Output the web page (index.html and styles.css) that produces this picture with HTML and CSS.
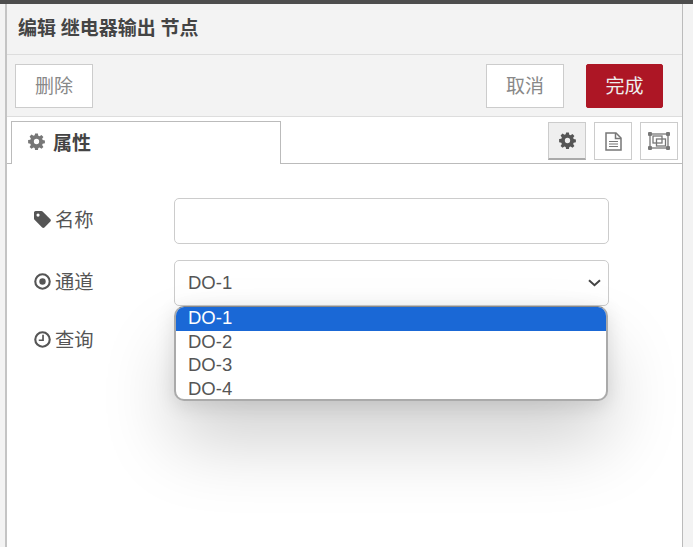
FILE: index.html
```html
<!DOCTYPE html>
<html lang="zh-CN">
<head>
    <meta charset="UTF-8">
    <title>编辑 继电器输出 节点</title>
    <link rel="stylesheet" href="styles.css">
</head>
<body>
    <div class="topbar"></div>
    <div class="tray">
        <div class="tray-title">编辑 继电器输出 节点</div>
        <div class="toolbar">
            <button class="btn">删除</button>
            <div class="toolbar-right">
                <button class="btn">取消</button>
                <button class="btn btn-primary">完成</button>
            </div>
        </div>
        <div class="tabs">
            <div class="tab">
                <svg class="icon gear-grey" viewBox="0 0 16 16"><use href="#gear"></use></svg>
                <span>属性</span>
            </div>
            <div class="tab-links">
                <a class="tab-link active">
                    <svg class="icon gear-dark" viewBox="0 0 16 16"><use href="#gear"></use></svg>
                </a>
                <a class="tab-link">
                    <svg class="doc-icon" viewBox="0 0 17 19" fill="none" stroke="#777" stroke-width="1.5">
                        <path d="M1 1h10l5 5v12H1z"/>
                        <path d="M10.500 1v5.500H16"/>
                        <path d="M4 9.500h9M4 12h9M4 14.500h9" stroke-width="1.200"/>
                    </svg>
                </a>
                <a class="tab-link">
                    <svg class="frame-icon" viewBox="0 0 22 18" fill="none" stroke="#777" stroke-width="1.300">
                        <rect x="2" y="2" width="18" height="14"/>
                        <rect x="5" y="4" width="9" height="7"/>
                        <rect x="8.500" y="7" width="9" height="7"/>
                        <g fill="#777" stroke="none">
                            <rect x="0" y="0" width="4" height="4" rx="1"/>
                            <rect x="18" y="0" width="4" height="4" rx="1"/>
                            <rect x="0" y="14" width="4" height="4" rx="1"/>
                            <rect x="18" y="14" width="4" height="4" rx="1"/>
                        </g>
                    </svg>
                </a>
            </div>
        </div>
        <div class="form">
            <div class="form-row">
                <label class="form-label">
                    <svg class="icon" viewBox="0 0 16 16"><path d="M0 1.500C0 .7.700 0 1.500 0h5.400c.5 0 .9.2 1.200.5l7.300 7.300c.6.6.6 1.500 0 2.100l-5.600 5.600c-.6.6-1.500.6-2.100 0L.5 8.200C.2 7.900 0 7.500 0 7z M3.800 2.300a1.500 1.500 0 1 0 0 3 1.500 1.500 0 0 0 0-3z" fill-rule="evenodd"/></svg>
                    <span>名称</span>
                </label>
                <input class="form-input" type="text">
            </div>
            <div class="form-row form-row-select">
                <label class="form-label">
                    <svg class="icon" viewBox="0 0 16 16"><circle class="icon-ring" cx="8" cy="8" r="6.800"/><circle cx="8" cy="8" r="3"/></svg>
                    <span>通道</span>
                </label>
                <div class="select-wrap">
                    <div class="select-box">
                        <span>DO-1</span>
                        <svg class="chevron" viewBox="0 0 13 8" fill="none" stroke="#444" stroke-width="2"><path d="M1 1.200l5.500 5 5.500-5"/></svg>
                    </div>
                    <ul class="select-menu">
                        <li class="selected">DO-1</li>
                        <li>DO-2</li>
                        <li>DO-3</li>
                        <li>DO-4</li>
                    </ul>
                </div>
            </div>
            <div class="form-row">
                <label class="form-label">
                    <svg class="icon" viewBox="0 0 16 16"><circle class="icon-ring" cx="8" cy="8" r="6.800"/><path class="icon-hand" d="M8.500 3.500v5.200H4.500"/></svg>
                    <span>查询</span>
                </label>
            </div>
        </div>
    </div>

    <svg class="defs" width="0" height="0">
        <symbol id="gear" viewBox="0 0 16 16">
            <path fill-rule="evenodd" d="M6.700 0.500h2.600l.4 2.100 1.200.5 1.800-1.200 1.800 1.800-1.200 1.800.5 1.200 2.100.4v2.600l-2.100.4-.5 1.200 1.200 1.800-1.800 1.800-1.800-1.200-1.200.5-.4 2.100H6.700l-.4-2.100-1.200-.5-1.800 1.200-1.800-1.800 1.200-1.800-.5-1.200-2.100-.4V6.700l2.100-.4.5-1.200-1.200-1.800 1.800-1.800 1.800 1.200 1.200-.5z M8 5.500a2.500 2.500 0 1 0 0 5 2.500 2.500 0 0 0 0-5z"/>
        </symbol>
    </svg>
</body>
</html>
```

FILE: styles.css
```css
* {
    box-sizing: border-box;
}

html, body {
    height: 100%;
}

body {
    margin: 0;
    background-color: #f3f3f3;
    color: #555;
    font-family: "Liberation Sans", "Noto Sans CJK SC", Arial, sans-serif;
    font-size: 18.500px;
    overflow: hidden;
}

.defs {
    display: block;
}

.topbar {
    height: 4px;
    background-color: #4d4d4d;
}

.tray {
    height: 543px;
    margin-left: 5px;
    margin-right: 10px;
    background-color: #fff;
    border-left: 2px solid #c4c4c4;
    border-right: 1px solid #bbb;
    display: flex;
    flex-direction: column;
}

.tray-title {
    height: 51px;
    padding: 0 11px;
    background-color: #f3f3f3;
    border-bottom: 1px solid #ddd;
    color: #444;
    font-size: 19px;
    font-weight: bold;
    line-height: 49px;
    word-spacing: -0.5px;
}

.toolbar {
    height: 62px;
    padding: 9px 19px 8px 8px;
    background-color: #f3f3f3;
    border-bottom: 1px solid #ddd;
    display: flex;
    justify-content: space-between;
}

.toolbar-right {
    display: flex;
    gap: 22px;
}

.btn {
    width: 78px;
    height: 44px;
    padding: 0 0 4px;
    background-color: #fff;
    border: 1px solid #ccc;
    color: #888;
    font-family: inherit;
    font-size: 19px;
}

.btn-primary {
    width: 77px;
    background-color: #ad1625;
    border-color: #ad1625;
    border-radius: 2px;
    color: #eee;
}

.tabs {
    height: 47px;
    padding: 4px 4px 0;
    border-bottom: 1px solid #bbb;
    display: flex;
    justify-content: space-between;
}

.tab {
    width: 270px;
    height: 43px;
    padding: 0 0 3px 16px;
    background-color: #fff;
    border: 1px solid #bbb;
    border-bottom: none;
    color: #444;
    font-size: 19px;
    font-weight: bold;
    display: flex;
    align-items: center;
    gap: 8px;
}

.tab-links {
    display: flex;
    gap: 8px;
    height: 38px;
    margin-top: 1px;
}

.tab-link {
    width: 38px;
    height: 38px;
    background-color: #fff;
    border: 1px solid #ccc;
    display: flex;
    align-items: center;
    justify-content: center;
}

.tab-link.active {
    background-color: #efefef;
    border-bottom: 2px solid #aaa;
}

.icon {
    width: 17px;
    height: 17px;
    fill: #555;
    flex-shrink: 0;
}

.icon-ring {
    fill: none;
    stroke: #555;
    stroke-width: 2;
}

.icon-hand {
    fill: none;
    stroke: #555;
    stroke-width: 1.600;
}

.gear-grey {
    fill: #777;
}

.gear-dark {
    fill: #555;
}

.doc-icon {
    width: 17px;
    height: 19px;
}

.frame-icon {
    width: 22px;
    height: 18px;
}

.form {
    padding: 34px 0 0 26px;
}

.form-row {
    display: flex;
    margin-bottom: 16px;
}

.form-row-select {
    margin-bottom: 12px;
}

.form-label {
    width: 141px;
    height: 46px;
    padding: 0 0 4px 1px;
    display: flex;
    align-items: center;
    gap: 4px;
    font-size: 19.300px;
}

.form-input {
    width: 435px;
    height: 46px;
    background-color: #fff;
    border: 1px solid #ccc;
    border-radius: 5px;
}

.select-wrap {
    position: relative;
    width: 435px;
}

.select-box {
    height: 46px;
    padding: 0 7px 0 13px;
    background-color: #fff;
    border: 1px solid #ccc;
    border-radius: 5px;
    display: flex;
    align-items: center;
    justify-content: space-between;
}

.chevron {
    width: 13px;
    height: 8px;
}

.select-menu {
    position: absolute;
    top: 46px;
    left: 0;
    width: 434px;
    height: 95px;
    margin: 0;
    padding: 0;
    list-style: none;
    background-color: #fff;
    border: 2px solid #aaa;
    border-top: 1px solid #888;
    border-radius: 10px;
    overflow: hidden;
    box-shadow: 0 42px 72px rgba(0, 0, 0, 0.18), 0 4px 20px rgba(0, 0, 0, 0.12);
}

.select-menu li {
    height: 23.600px;
    padding-left: 12px;
    line-height: 22px;
}

.select-menu li.selected {
    background-color: #1a68d6;
    color: #fff;
}
```
